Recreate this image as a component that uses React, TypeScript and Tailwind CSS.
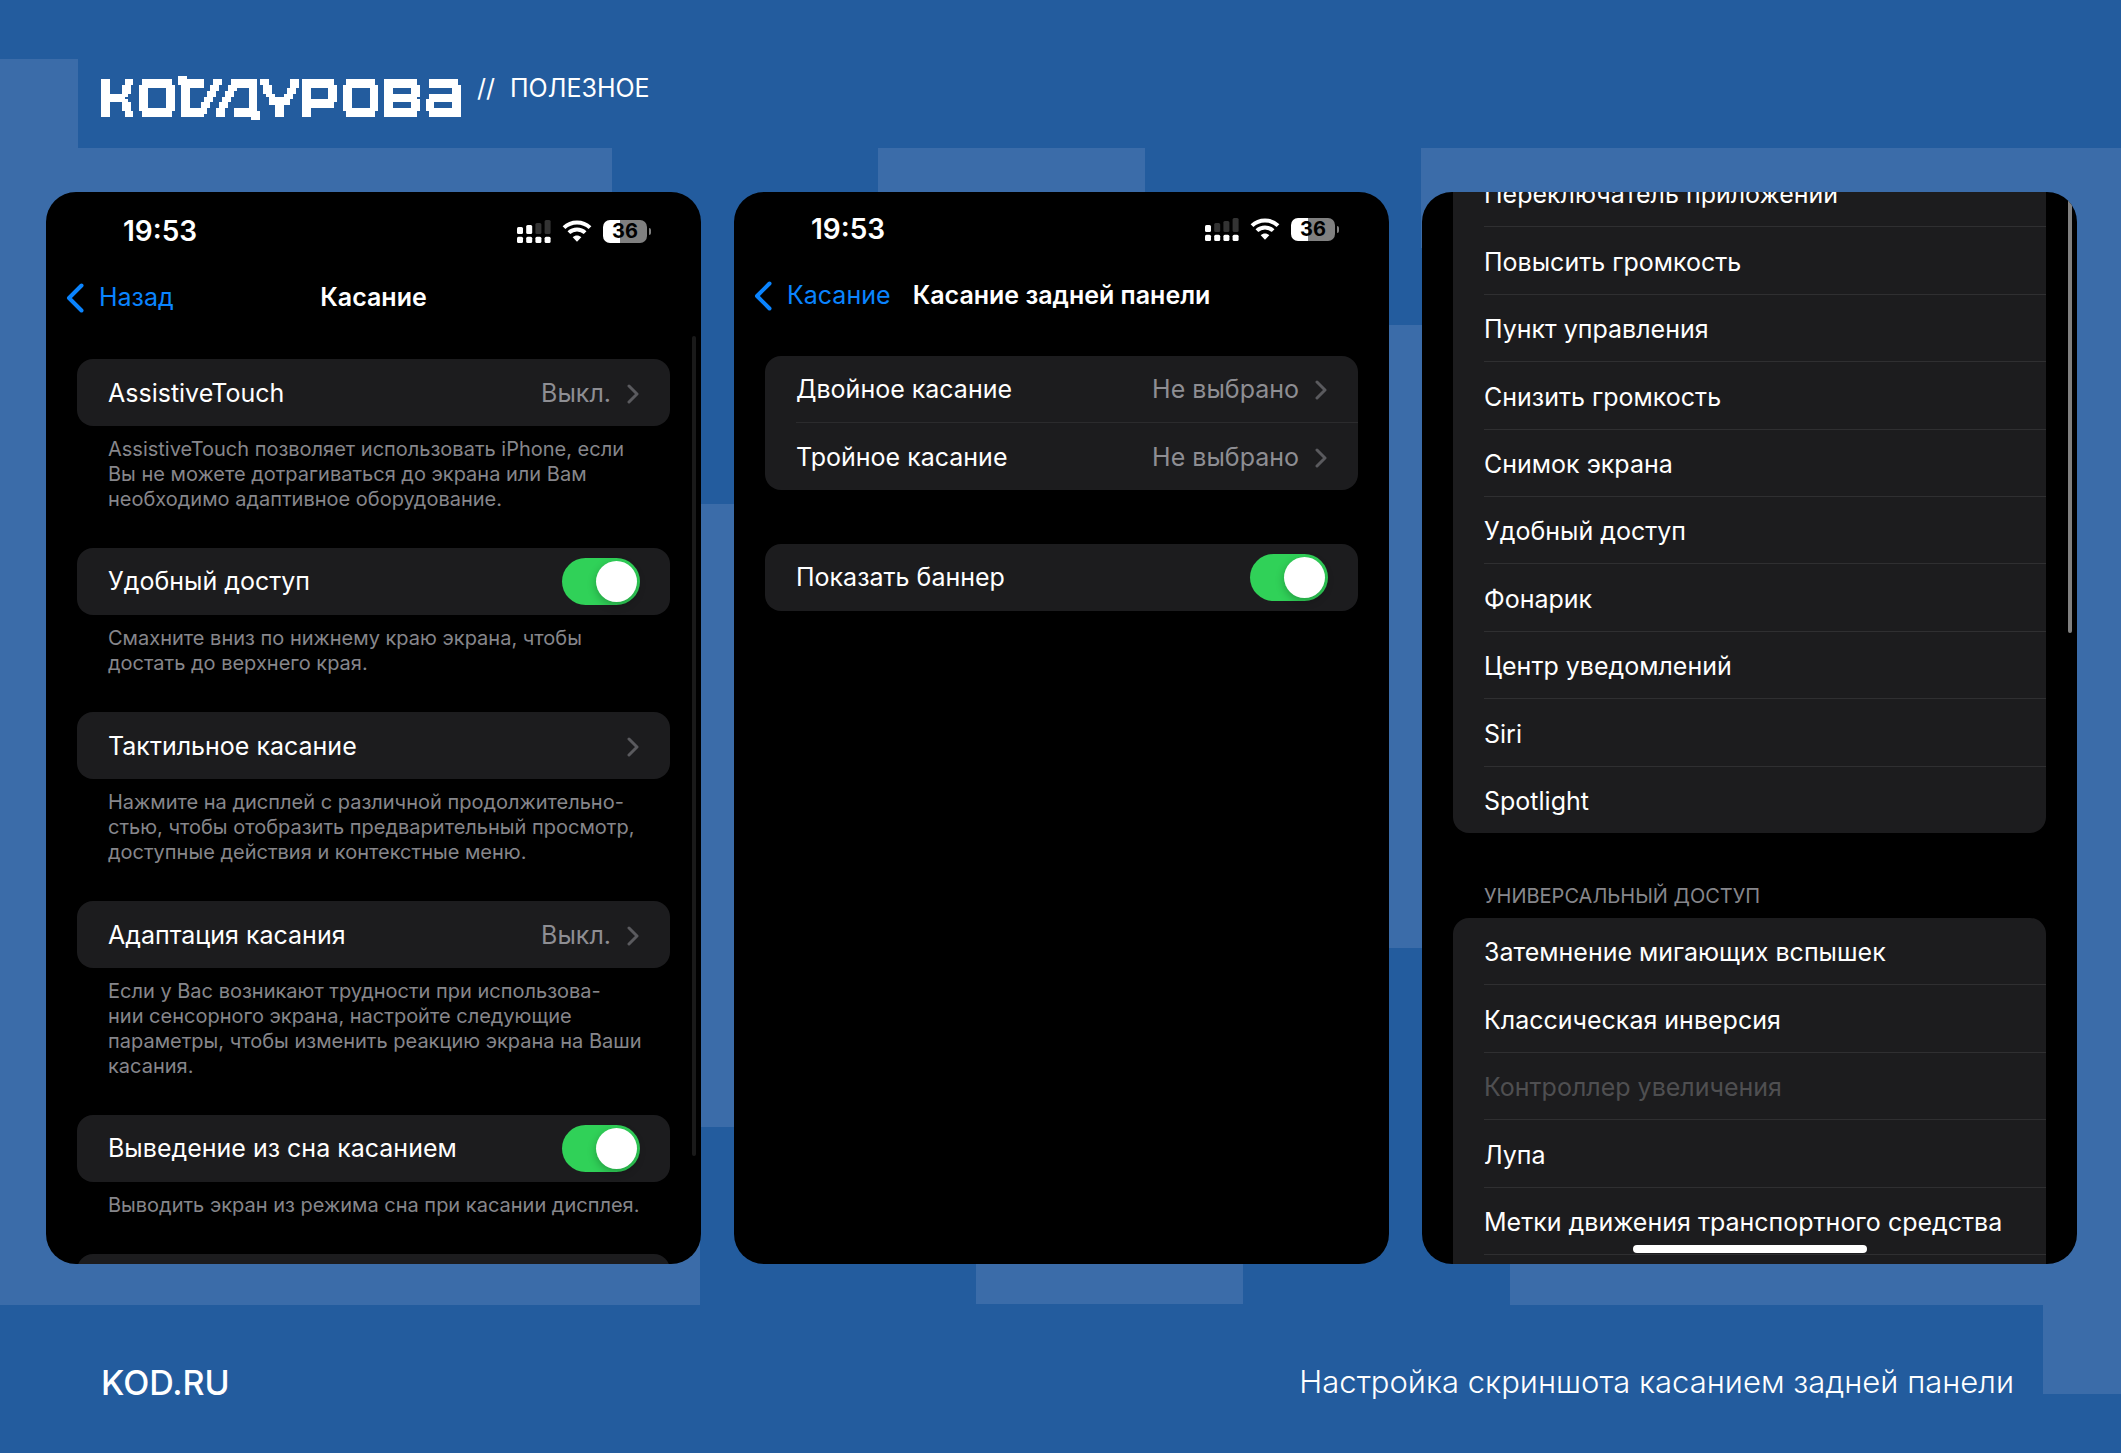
import type { ReactNode } from "react";

type Cell = [x: number, y: number, w: number, h: number];

// Pixel blocks of the wordmark, on a 122 x 15 grid.
const logoCells: Cell[] = [
  // К
  [0, 1, 3, 13], [3, 6, 5, 3], [8, 1, 3, 2], [7, 3, 3, 3], [8, 6, 1, 1], [8, 8, 1, 1], [7, 9, 3, 3], [8, 12, 3, 2],
  // О
  [14, 1, 10, 3], [13, 3, 3, 9], [22, 3, 3, 9], [14, 11, 10, 3],
  // Д
  [26, 0, 3, 3], [27, 1, 8, 3], [27, 3, 3, 11], [27, 11, 9, 2], [27, 13, 8, 1],
  [38, 1, 3, 2], [37, 3, 3, 2], [36, 5, 3, 2], [35, 7, 3, 2], [34, 9, 3, 2],
  // Д
  [44, 1, 9, 3], [43, 3, 3, 2], [42, 5, 3, 2], [41, 7, 3, 2], [40, 9, 3, 2], [39, 11, 3, 3],
  [50, 3, 3, 9], [45, 11, 8, 3], [51, 12, 3, 3],
  // У
  [54, 1, 3, 2], [55, 3, 3, 3], [56, 6, 3, 1], [57, 7, 7, 3], [64, 1, 3, 3], [63, 4, 3, 2], [62, 6, 3, 2], [59, 10, 3, 4],
  // Р
  [68, 1, 3, 13], [71, 1, 8, 3], [77, 3, 3, 6], [71, 8, 8, 3],
  // О
  [83, 1, 10, 3], [82, 3, 3, 9], [91, 3, 3, 9], [83, 11, 10, 3],
  // В
  [96, 1, 3, 13], [99, 1, 8, 3], [105, 3, 3, 4], [99, 6, 8, 3], [105, 8, 3, 4], [99, 11, 8, 3],
  // А
  [111, 1, 10, 3], [119, 3, 3, 11], [111, 6, 8, 3], [110, 8, 3, 4], [111, 11, 8, 3],
];

// Light blocks of the backdrop.
const backdropCells: Cell[] = [
  [0, 59, 78, 1246],
  [78, 148, 534, 100],
  [78, 1200, 622, 105],
  [878, 148, 267, 100],
  [690, 504, 60, 623],
  [1380, 325, 60, 623],
  [976, 1200, 267, 104],
  [1421, 148, 700, 100],
  [2043, 148, 78, 1246],
  [1510, 1200, 611, 105],
];

const firstActions = [
  "Переключатель приложений",
  "Повысить громкость",
  "Пункт управления",
  "Снизить громкость",
  "Снимок экрана",
  "Удобный доступ",
  "Фонарик",
  "Центр уведомлений",
  "Siri",
  "Spotlight",
];

const accessibilityActions = [
  "Затемнение мигающих вспышек",
  "Классическая инверсия",
  "Контроллер увеличения",
  "Лупа",
  "Метки движения транспортного средства",
];

function Backdrop() {
  return (
    <svg
      className="absolute inset-0 h-full w-full fill-[#3b6ca9]"
      viewBox="0 0 2121 1453"
      preserveAspectRatio="none"
      aria-hidden="true"
    >
      {backdropCells.map(([x, y, width, height]) => (
        <rect key={`${x}-${y}`} x={x} y={y} width={width} height={height} />
      ))}
    </svg>
  );
}

function Logo() {
  return (
    <svg
      className="h-[44px] w-[360px] fill-white"
      viewBox="0 0 122 15"
      preserveAspectRatio="none"
      shapeRendering="crispEdges"
      role="img"
      aria-label="Код Дурова"
    >
      {logoCells.map(([x, y, width, height]) => (
        <rect key={`${x}-${y}`} x={x} y={y} width={width} height={height} />
      ))}
    </svg>
  );
}

function SignalIcon({ bars }: { bars: number }) {
  return (
    <svg className="h-[23px] w-[34px]" viewBox="0 0 34 23" aria-hidden="true">
      {[7, 5, 3, 0].map((top, index) => (
        <g key={top}>
          <rect
            x={index * 9.2}
            y={top}
            width="6"
            height={14 - top}
            rx="1.5"
            fill={index < bars ? "#fff" : "#333"}
          />
          <rect x={index * 9.2} y="16.7" width="6" height="6.3" rx="1.5" fill="#fff" />
        </g>
      ))}
    </svg>
  );
}

function WifiIcon() {
  return (
    <svg className="h-[22px] w-[30px]" viewBox="0 0 30 22" fill="none" aria-hidden="true">
      <path d="M2 7.6C9.2 .7 20.8 .7 28 7.6" stroke="#fff" strokeWidth="4" />
      <path d="M6.9 12.6c4.6-4.3 11.6-4.3 16.2 0" stroke="#fff" strokeWidth="4" />
      <path d="M15 21.8l-4.3-4.6c2.4-2.2 6.2-2.2 8.6 0z" fill="#fff" />
    </svg>
  );
}

function Battery() {
  return (
    <div className="flex items-center gap-[2px]">
      <div className="flex h-[23px] w-[44px] items-center justify-center rounded-[7px] bg-linear-to-r from-white from-38% to-[#808080] to-38% text-[20px] leading-none font-bold text-black">
        36
      </div>
      <div className="h-[7px] w-[2px] rounded-r-full bg-[#808080]" />
    </div>
  );
}

function StatusBar({ bars }: { bars: number }) {
  return (
    <div className="flex h-10 items-center justify-between pr-[50px] pl-[77px]">
      <span className="text-[28px] font-semibold">19:53</span>
      <div className="flex items-center gap-[11px]">
        <SignalIcon bars={bars} />
        <WifiIcon />
        <Battery />
      </div>
    </div>
  );
}

function NavBar({ back, title }: { back: string; title: string }) {
  return (
    <nav className="mt-6 grid h-11 grid-cols-[1fr_auto_1fr] items-center px-5 pt-0.5 text-[25px]">
      <a href="#back" className="flex items-center gap-[15px] text-[#0a84ff]">
        <svg className="h-[30px] w-[18px] shrink-0" viewBox="0 0 18 30" fill="none" aria-hidden="true">
          <path
            d="M15.5 2.5 3 15l12.5 12.5"
            stroke="currentColor"
            strokeWidth="4"
            strokeLinecap="round"
            strokeLinejoin="round"
          />
        </svg>
        {back}
      </a>
      <h2 className="font-semibold">{title}</h2>
    </nav>
  );
}

function Phone({ className, children }: { className?: string; children: ReactNode }) {
  return (
    <section className={`relative min-h-0 overflow-hidden rounded-[30px] bg-black ${className ?? ""}`}>
      {children}
    </section>
  );
}

function Group({ children }: { children: ReactNode }) {
  return <div className="mx-[31px] overflow-hidden rounded-2xl bg-[#1c1c1e] text-[25px]">{children}</div>;
}

function Note({ children }: { children: ReactNode }) {
  return (
    <p className="mx-[31px] px-[31px] pt-[11px] pb-9 text-[20px] leading-[25px] whitespace-nowrap text-[#86868b]">
      {children}
    </p>
  );
}

function LinkRow({ label, value, divided }: { label: string; value?: string; divided?: boolean }) {
  return (
    <a href="#open" className="block h-[67px] pl-[31px]">
      <span
        className={`flex h-full items-center justify-between pt-0.5 pr-[31px] ${divided ? "border-b border-[#2b2b2d]" : ""}`}
      >
        {label}
        <span className="flex items-center gap-4 text-[#8e8e93]">
          {value}
          <svg className="h-5 w-[12px]" viewBox="0 0 12 20" fill="none" aria-hidden="true">
            <path
              d="M2 2l8 8-8 8"
              stroke="#5a5a5e"
              strokeWidth="3"
              strokeLinecap="round"
              strokeLinejoin="round"
            />
          </svg>
        </span>
      </span>
    </a>
  );
}

function SwitchRow({ label }: { label: string }) {
  return (
    <label className="flex h-[67px] items-center justify-between pr-[30px] pl-[31px]">
      {label}
      <input
        type="checkbox"
        role="switch"
        defaultChecked
        className="flex h-[47px] w-[78px] appearance-none items-center rounded-full bg-[#39393d] p-[3px] before:size-[41px] before:rounded-full before:bg-white before:shadow-[0_3px_8px_rgba(0,0,0,0.25)] checked:justify-end checked:bg-[#30d158]"
      />
    </label>
  );
}

type ActionListProps = {
  actions: string[];
  className: string;
  disabled?: string;
};

function ActionList({ actions, className, disabled }: ActionListProps) {
  return (
    <ul className={`flex flex-col ${className}`}>
      {actions.map((action) => (
        <li key={action} className="flex-1 pl-[31px]">
          <button
            type="button"
            disabled={action === disabled}
            className="h-full w-full border-b border-[#2f2f31] pt-1 text-left disabled:text-[#4f4f51]"
          >
            {action}
          </button>
        </li>
      ))}
    </ul>
  );
}

export default function App() {
  return (
    <div className="relative h-screen overflow-hidden bg-[#235c9e] font-['Inter','Liberation_Sans',sans-serif] text-white">
      <Backdrop />
      <div className="relative flex h-full flex-col">
        <header className="flex h-48 shrink-0 items-start gap-4 pt-[76px] pl-[101px]">
          <Logo />
          <p className="flex gap-[15px] text-[25px] leading-6">
            <span>//</span>
            <span>ПОЛЕЗНОЕ</span>
          </p>
        </header>

        <main className="grid min-h-0 flex-1 grid-cols-3 gap-[33px] pr-11 pl-[46px]">
          <Phone className="pt-[19px]">
            <StatusBar bars={2} />
            <NavBar back="Назад" title="Касание" />
            <div className="mt-10">
              <Group>
                <LinkRow label="AssistiveTouch" value="Выкл." />
              </Group>
              <Note>
                AssistiveTouch позволяет использовать iPhone, если
                <br />
                Вы не можете дотрагиваться до экрана или Вам
                <br />
                необходимо адаптивное оборудование.
              </Note>
              <Group>
                <SwitchRow label="Удобный доступ" />
              </Group>
              <Note>
                Смахните вниз по нижнему краю экрана, чтобы
                <br />
                достать до верхнего края.
              </Note>
              <Group>
                <LinkRow label="Тактильное касание" />
              </Group>
              <Note>
                Нажмите на дисплей с различной продолжительно-
                <br />
                стью, чтобы отобразить предварительный просмотр,
                <br />
                доступные действия и контекстные меню.
              </Note>
              <Group>
                <LinkRow label="Адаптация касания" value="Выкл." />
              </Group>
              <Note>
                Если у Вас возникают трудности при использова-
                <br />
                нии сенсорного экрана, настройте следующие
                <br />
                параметры, чтобы изменить реакцию экрана на Ваши
                <br />
                касания.
              </Note>
              <Group>
                <SwitchRow label="Выведение из сна касанием" />
              </Group>
              <Note>Выводить экран из режима сна при касании дисплея.</Note>
              <Group>
                <div className="h-[67px]" />
              </Group>
            </div>
            <div className="absolute top-36 right-[5px] bottom-[108px] w-1 rounded-full bg-[#1a1a1a]" />
          </Phone>

          <Phone className="pt-[17px]">
            <StatusBar bars={1} />
            <NavBar back="Касание" title="Касание задней панели" />
            <div className="mt-[39px] flex flex-col gap-[54px]">
              <Group>
                <LinkRow label="Двойное касание" value="Не выбрано" divided />
                <LinkRow label="Тройное касание" value="Не выбрано" />
              </Group>
              <Group>
                <SwitchRow label="Показать баннер" />
              </Group>
            </div>
          </Phone>

          <Phone>
            {/* the list is scrolled, so its first row slides under the top edge */}
            <div className="-mt-8">
              <Group>
                <ActionList actions={firstActions} className="-mb-px h-[674px]" />
              </Group>
              <h3 className="mx-[31px] px-[31px] pt-[51px] pb-[10px] text-[20px] leading-6 text-[#86868b] uppercase">
                Универсальный доступ
              </h3>
              <Group>
                <ActionList
                  actions={accessibilityActions}
                  className="mb-8 h-[337px]"
                  disabled="Контроллер увеличения"
                />
              </Group>
            </div>
            <div className="absolute top-0 right-[5px] h-[441px] w-1 rounded-b-full bg-[#808080]" />
            <div className="absolute bottom-[11px] left-1/2 h-2 w-[234px] -translate-x-1/2 rounded-full bg-white" />
          </Phone>
        </main>

        <footer className="flex h-[189px] shrink-0 items-center justify-between pt-12 pr-[107px] pl-[101px]">
          <a href="https://kod.ru" className="text-[34px] font-medium">
            KOD.RU
          </a>
          <p className="text-[31px] font-light">Настройка скриншота касанием задней панели</p>
        </footer>
      </div>
    </div>
  );
}
